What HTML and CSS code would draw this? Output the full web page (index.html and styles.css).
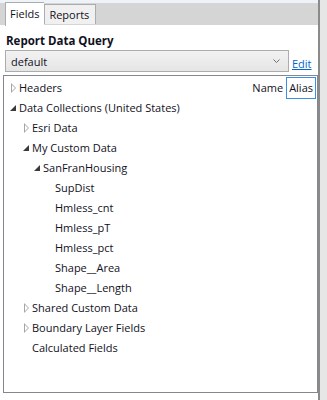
FILE: index.html
```html
<!DOCTYPE html>
<html lang="en">
<head>
    <meta charset="UTF-8">
    <title>Fields</title>
    <link rel="stylesheet" href="styles.css">
</head>
<body>
    <div class="frame">
        <div class="panel">
            <div class="tabs">
                <div class="tab active">Fields</div>
                <div class="tab">Reports</div>
            </div>

            <div class="content">
                <div class="query-title">Report Data Query</div>
                <div class="query-row">
                    <div class="select">
                        <span>default</span>
                        <svg class="chevron" width="7" height="4" viewBox="0 0 7 4"><path d="M0.5 0.5 L3.5 3.5 L6.5 0.5" fill="none" stroke="#707070" stroke-width="1"/></svg>
                    </div>
                    <a class="edit" href="#">Edit</a>
                </div>

                <div class="tree">
                    <div class="toggle">
                        <span class="opt">Name</span>
                        <span class="opt selected">Alias</span>
                    </div>

                    <div class="node lvl0"><span class="arrow closed"></span>Headers</div>
                    <div class="node lvl0"><span class="arrow open"></span>Data Collections (United States)</div>
                    <div class="node lvl1"><span class="arrow closed"></span>Esri Data</div>
                    <div class="node lvl1"><span class="arrow open"></span>My Custom Data</div>
                    <div class="node lvl2"><span class="arrow open"></span>SanFranHousing</div>
                    <div class="node lvl3"><span class="arrow"></span>SupDist</div>
                    <div class="node lvl3"><span class="arrow"></span>Hmless_cnt</div>
                    <div class="node lvl3"><span class="arrow"></span>Hmless_pT</div>
                    <div class="node lvl3"><span class="arrow"></span>Hmless_pct</div>
                    <div class="node lvl3"><span class="arrow"></span>Shape__Area</div>
                    <div class="node lvl3"><span class="arrow"></span>Shape__Length</div>
                    <div class="node lvl1"><span class="arrow closed"></span>Shared Custom Data</div>
                    <div class="node lvl1"><span class="arrow closed"></span>Boundary Layer Fields</div>
                    <div class="node lvl1"><span class="arrow"></span>Calculated Fields</div>
                </div>
            </div>
        </div>
        <div class="splitter"></div>
        <div class="side"></div>
    </div>
</body>
</html>
```

FILE: styles.css
```css
body {
    margin: 0;
    font-family: "Open Sans", "Noto Sans", sans-serif;
    font-size: 11px;
    color: #111122;
    background: #e8e8e8;
}

.frame {
    display: flex;
    height: 400px;
}

.panel {
    width: 318px;
    background: #fff;
    border-top: 3px solid #eef3fa;
    display: flex;
    flex-direction: column;
}

.splitter {
    width: 2px;
    background: #8a8a8a;
}

.side {
    flex: 1;
    background: #e6e6e6;
}

.tabs {
    display: flex;
    align-items: flex-end;
    height: 22px;
    background: #d5d5d5;
    padding-left: 5px;
}

.tab {
    height: 19px;
    line-height: 19px;
    padding: 0 6px 0 4px;
    background: #f0f0f0;
    border: 1px solid #acacac;
    border-bottom: none;
    margin-bottom: 1px;
}

.tab.active {
    height: 23px;
    line-height: 22px;
    padding: 0 5px 0 4px;
    background: #fff;
    margin-bottom: -1px;
    border-right: none;
}

.content {
    flex: 1;
    padding: 6px 0 7px 3px;
    display: flex;
    flex-direction: column;
}

.query-title {
    font-weight: bold;
    font-size: 11.5px;
    padding-left: 3px;
    line-height: 16px;
    margin-top: 2px;
}

.query-row {
    display: flex;
    align-items: center;
    margin-top: 1px;
    padding-left: 2px;
}

.select {
    width: 284px;
    height: 22px;
    box-sizing: border-box;
    border: 1px solid #acacac;
    background: linear-gradient(#f2f2f2, #e5e5e5);
    display: flex;
    align-items: center;
    justify-content: space-between;
    padding: 0 8px 0 5px;
}

.edit {
    margin-left: 3px;
    color: #0066cc;
    text-decoration: underline;
    position: relative;
    top: 2px;
}

.tree {
    flex: 1;
    width: 315px;
    box-sizing: border-box;
    border: 1px solid #828790;
    margin-top: 3px;
    padding-top: 1px;
    position: relative;
}

.toggle {
    position: absolute;
    right: 1px;
    top: 1px;
    display: flex;
    align-items: center;
}

.opt {
    padding: 1px 2px;
    line-height: 18px;
    border: 1px solid transparent;
}

.opt.selected {
    border-color: #3c8fe0;
}

.node {
    height: 20px;
    display: flex;
    align-items: center;
    white-space: nowrap;
}

.arrow {
    width: 12px;
    height: 20px;
    flex: none;
    position: relative;
}

.arrow.closed::before {
    content: "";
    position: absolute;
    left: 4px;
    top: 6px;
    border-left: 5px solid #a6a6a6;
    border-top: 5px solid transparent;
    border-bottom: 5px solid transparent;
}

.arrow.closed::after {
    content: "";
    position: absolute;
    left: 5px;
    top: 8px;
    border-left: 3px solid #fff;
    border-top: 3px solid transparent;
    border-bottom: 3px solid transparent;
}

.arrow.open::before {
    content: "";
    position: absolute;
    left: 3px;
    top: 8px;
    border-right: 6px solid #3a3a3a;
    border-top: 6px solid transparent;
}

.lvl0 { padding-left: 3px; }
.lvl1 { padding-left: 16px; }
.lvl2 { padding-left: 27px; }
.lvl3 { padding-left: 39px; }
```
